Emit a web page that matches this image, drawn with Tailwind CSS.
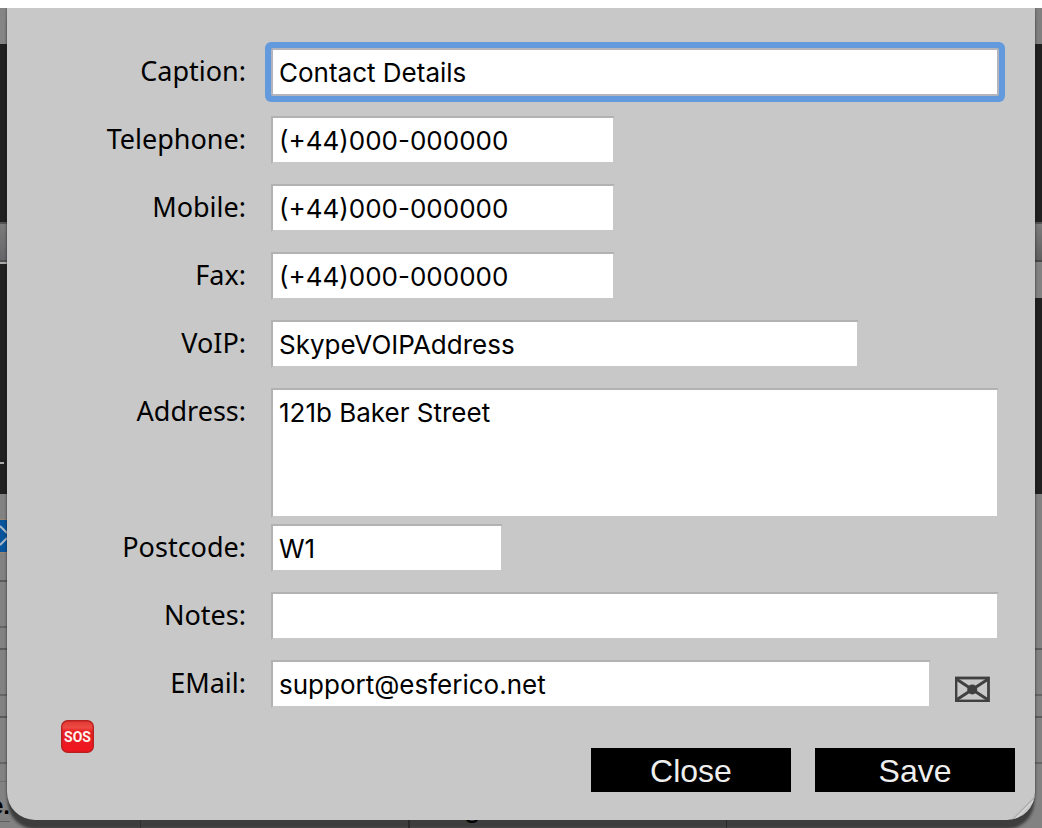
<!DOCTYPE html>
<html lang="en">
<head>
    <meta charset="UTF-8">
    <meta name="viewport" content="width=device-width, initial-scale=1.0">
    <title>Contact Details</title>
    <script src="https://cdn.jsdelivr.net/npm/@tailwindcss/browser@4"></script>
</head>
<body class="bg-white pt-2 font-['Inter','Liberation_Sans',sans-serif] text-black">

    <div class="relative min-h-[calc(100vh-8px)] overflow-hidden bg-[#828282]">

        <!-- Dimmed page behind the dialog -->
        <div class="absolute inset-0 flex justify-between" aria-hidden="true">
            <div class="flex w-2 flex-col">
                <div class="h-9 bg-[#858585]"></div>
                <div class="h-[178px] bg-[#202020]"></div>
                <div class="h-10 border-t-2 border-b-2 border-t-[#555] border-b-[#505050] bg-linear-to-b from-[#7c7c7c] to-[#66666a]"></div>
                <div class="h-0.5 bg-[#aaa]"></div>
                <div class="h-[198px] bg-[#202020]"></div>
                <div class="flex h-0.5 bg-[#202020]"><div class="w-1 bg-[#aaa]"></div></div>
                <div class="h-[30px] bg-[#202020]"></div>
                <div class="h-[26px] border-b border-[#9a8570]"></div>
                <div class="flex h-8 items-center bg-[#07549c]">
                    <svg class="h-7 w-2" viewBox="0 0 8 28" fill="none" stroke="#a8b8c8" stroke-width="2"><path d="M0 4l7 7M0 23l7-7"/></svg>
                </div>
                <div class="h-[30px] border-t border-b-2 border-t-[#9a8570] border-b-[#5c5c5c]"></div>
                <div class="h-[46px] border-b-2 border-[#656565]"></div>
                <div class="h-[22px] border-b-2 border-[#5c5c5c]"></div>
                <div class="h-[46px] border-b-2 border-[#656565]"></div>
                <div class="h-[22px] border-b-2 border-[#5c5c5c]"></div>
                <div class="h-[46px] border-b-2 border-[#656565]"></div>
                <div class="h-[18px] border-b border-[#707070]"></div>
                <div class="flex h-10 w-2.5 justify-end border-b border-[#606060] pt-2 font-['Liberation_Sans',sans-serif] text-2xl font-bold">e.</div>
            </div>
            <div class="flex w-2 flex-col">
                <div class="h-9 bg-[#808080]"></div>
                <div class="h-[178px] bg-[#202020]"></div>
                <div class="h-10 border-t-2 border-b-2 border-t-[#555] border-b-[#484848] bg-linear-to-b from-[#7c7c7c] to-[#606060]"></div>
                <div class="h-9"></div>
                <div class="h-[196px] bg-[#202020]"></div>
                <div class="h-[156px] border-b-2 border-[#5c5c5c]"></div>
                <div class="h-[46px] border-b-2 border-[#656565]"></div>
                <div class="h-[22px] border-b-2 border-[#5c5c5c]"></div>
                <div class="h-[46px] border-b-2 border-[#656565]"></div>
            </div>
        </div>

        <form class="relative mx-[7px] rounded-b-[28px] bg-[#c8c8c8] pt-10 shadow-[0_10px_3px_-1px_#3d3d3d,0_0_3px_rgba(0,0,0,0.5)]">

            <!-- Fields -->
            <div class="grid grid-cols-[239px_1fr] gap-x-[25px] pr-9 text-[26px] leading-8">
                <label for="caption" class="h-17 pt-[7px] text-right font-['Noto_Sans',sans-serif] text-[27px]">Caption:</label>
                <input id="caption" type="text" value="Contact Details" class="h-12 w-full rounded-[2px] border-2 border-[#b4b4bc] bg-white px-1.5 ring-6 ring-[#6399dd] outline-none">

                <label for="telephone" class="h-17 pt-[7px] text-right font-['Noto_Sans',sans-serif] text-[27px]">Telephone:</label>
                <input id="telephone" type="tel" value="(+44)000-000000" class="h-12 w-full max-w-[344px] border-2 border-t-[#b2b2b2] border-r-[#c8c8c8] border-b-[#c8c8c8] border-l-[#b2b2b2] bg-white px-1.5">

                <label for="mobile" class="h-17 pt-[7px] text-right font-['Noto_Sans',sans-serif] text-[27px]">Mobile:</label>
                <input id="mobile" type="tel" value="(+44)000-000000" class="h-12 w-full max-w-[344px] border-2 border-t-[#b2b2b2] border-r-[#c8c8c8] border-b-[#c8c8c8] border-l-[#b2b2b2] bg-white px-1.5">

                <label for="fax" class="h-17 pt-[7px] text-right font-['Noto_Sans',sans-serif] text-[27px]">Fax:</label>
                <input id="fax" type="tel" value="(+44)000-000000" class="h-12 w-full max-w-[344px] border-2 border-t-[#b2b2b2] border-r-[#c8c8c8] border-b-[#c8c8c8] border-l-[#b2b2b2] bg-white px-1.5">

                <label for="voip" class="h-17 pt-[7px] text-right font-['Noto_Sans',sans-serif] text-[27px]">VoIP:</label>
                <input id="voip" type="text" value="SkypeVOIPAddress" class="h-12 w-full max-w-[588px] border-2 border-t-[#b2b2b2] border-r-[#c8c8c8] border-b-[#c8c8c8] border-l-[#b2b2b2] bg-white px-1.5">

                <label for="address" class="h-34 pt-[7px] text-right font-['Noto_Sans',sans-serif] text-[27px]">Address:</label>
                <textarea id="address" class="h-[130px] w-full resize-none border-2 border-t-[#b2b2b2] border-r-[#c8c8c8] border-b-[#c8c8c8] border-l-[#b2b2b2] bg-white px-1.5 pt-[7px]">121b Baker Street</textarea>

                <label for="postcode" class="h-17 pt-[7px] text-right font-['Noto_Sans',sans-serif] text-[27px]">Postcode:</label>
                <input id="postcode" type="text" value="W1" class="h-12 w-full max-w-[232px] border-2 border-t-[#b2b2b2] border-r-[#c8c8c8] border-b-[#c8c8c8] border-l-[#b2b2b2] bg-white px-1.5">

                <label for="notes" class="h-17 pt-[7px] text-right font-['Noto_Sans',sans-serif] text-[27px]">Notes:</label>
                <input id="notes" type="text" class="h-12 w-full border-2 border-t-[#b2b2b2] border-r-[#c8c8c8] border-b-[#c8c8c8] border-l-[#b2b2b2] bg-white px-1.5">

                <label for="email" class="h-12 pt-[7px] text-right font-['Noto_Sans',sans-serif] text-[27px]">EMail:</label>
                <div class="flex items-start gap-6 pr-2">
                    <input id="email" type="email" value="support@esferico.net" class="h-12 min-w-0 flex-1 border-2 border-t-[#b2b2b2] border-r-[#c8c8c8] border-b-[#c8c8c8] border-l-[#b2b2b2] bg-white px-1.5">
                    <button type="button" aria-label="Send email" class="mt-4">
                        <svg class="h-[26px] w-9" viewBox="0 0 36 26" fill="none" stroke="#404040">
                            <rect x="1" y="2" width="32.500" height="23" stroke-width="2.800"/>
                            <path d="M2 3.500l15.250 10L32.500 3.500M2 23.500l15.250-10L32.500 23.500" stroke-width="3"/>
                            <circle cx="17.250" cy="13.500" r="5" fill="#404040" stroke="none"/>
                        </svg>
                    </button>
                </div>
            </div>

            <!-- Actions -->
            <div class="flex items-start justify-between pt-3 pr-5 pb-7 pl-[54px]">
                <button type="button" aria-label="Help">
                    <svg class="size-[33px]" viewBox="0 0 33 33">
                        <defs>
                            <linearGradient id="sos" x1="0" y1="0" x2="0" y2="1">
                                <stop offset="0" stop-color="#e03832"/>
                                <stop offset="0.22" stop-color="#ee4a44"/>
                                <stop offset="0.34" stop-color="#e62026"/>
                                <stop offset="1" stop-color="#f0141e"/>
                            </linearGradient>
                        </defs>
                        <rect x="0.700" y="0.700" width="31.600" height="31.600" rx="6" fill="url(#sos)" stroke="#b8201f" stroke-width="1.400"/>
                        <text x="16.500" y="22" text-anchor="middle" font-family="Roboto, sans-serif" font-size="14" font-weight="700" fill="#fff4ee">SOS</text>
                    </svg>
                </button>
                <div class="mt-7 flex gap-6 font-['Liberation_Sans',sans-serif] text-[32px] leading-11 text-[#eee]">
                    <button type="button" class="h-11 w-50 bg-black pt-px">Close</button>
                    <button type="submit" class="h-11 w-50 bg-black pt-px">Save</button>
                </div>
            </div>

            <!-- Resize grip -->
            <div class="pointer-events-none absolute right-0 bottom-0 size-7 overflow-hidden rounded-br-[28px]">
                <svg class="size-7" viewBox="0 0 28 28" fill="none" aria-hidden="true">
                    <path d="M5 28L28 5" stroke="#acacac" stroke-width="1.500"/>
                    <path d="M7 28L28 7" stroke="#d4d4d4" stroke-width="1.500"/>
                    <path d="M12 28L28 12" stroke="#b4b4b4" stroke-width="1.500"/>
                </svg>
            </div>
        </form>

        <!-- Column edges showing through the shadow -->
        <div class="absolute inset-x-0 bottom-0 flex h-2 overflow-hidden" aria-hidden="true">
            <div class="w-[141px] border-r border-[#303030]"></div>
            <div class="w-[269px] border-r-2 border-[#2a2a2a]"></div>
            <div class="flex w-[317px] items-end border-r border-[#2a2a2a] pb-1.5 pl-[54px] font-['Liberation_Sans',sans-serif] text-3xl leading-[30px]">g</div>
        </div>
    </div>

</body>
</html>
